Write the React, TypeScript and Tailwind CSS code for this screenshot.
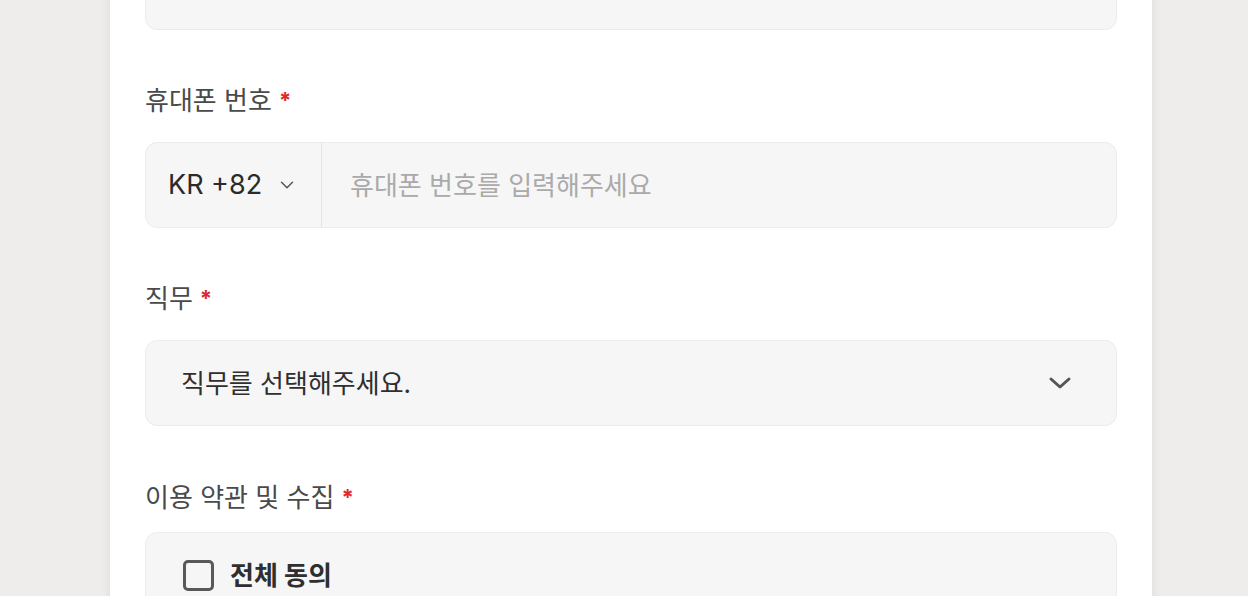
import { ChevronDown } from "lucide-react"

function Label({ text, className }: { text: string; className?: string }) {
  return (
    <div className={"flex items-center h-8 text-[26px] text-[#4a4a4a] " + (className ?? "")}>
      <span>{text}</span>
      <span className="ml-[7px] text-[#e0262b] font-bold text-[22px]">*</span>
    </div>
  )
}

export default function App() {
  return (
    <div
      className="h-[596px] overflow-hidden bg-[#eeedeb]"
      style={{ fontFamily: '"Inter", "Noto Sans CJK KR", sans-serif' }}
    >
      <div className="ml-[110px] w-[1042px] h-[700px] bg-white shadow-[0_0_10px_rgba(0,0,0,0.08)] px-[35px]">
        {/* previous field (scrolled out of view) */}
        <div className="-mt-[56px] h-[86px] rounded-[12px] border border-[#ececec] bg-[#f6f6f6]" />

        {/* phone */}
        <Label text="휴대폰 번호" className="mt-[54px]" />
        <div className="mt-[26px] flex h-[86px] rounded-[12px] border border-[#ececec] bg-[#f6f6f6]">
          <button className="flex w-[176px] items-center border-r border-[#e4e4e4] pl-[22px] text-[27px] text-[#2b2b2b]">
            KR +82
            <ChevronDown className="ml-[14px] h-[22px] w-[22px] text-[#555]" strokeWidth={1.6} />
          </button>
          <input
            className="flex-1 bg-transparent pl-[28px] text-[26px] text-[#333] outline-none placeholder:text-[#aaaaaa]"
            placeholder="휴대폰 번호를 입력해주세요"
          />
        </div>

        {/* job */}
        <Label text="직무" className="mt-[54px]" />
        <div className="mt-[26px] flex h-[86px] items-center justify-between rounded-[12px] border border-[#ececec] bg-[#f6f6f6] pl-[35px] pr-[44px]">
          <span className="text-[26px] text-[#2f2f2f]">직무를 선택해주세요.</span>
          <svg width="24" height="14" viewBox="0 0 24 14" fill="none">
            <path d="M3 3l9 8 9-8" stroke="#555" strokeWidth="3" strokeLinecap="round" strokeLinejoin="round" />
          </svg>
        </div>

        {/* terms */}
        <Label text="이용 약관 및 수집" className="mt-[55px]" />
        <div className="mt-[19px] h-[120px] rounded-[12px] border border-[#ececec] bg-[#f6f6f6] px-[37px] pt-[23px]">
          <label className="flex items-center">
            <span className="h-[31px] w-[31px] rounded-[5px] border-[3px] border-[#595959] bg-[#f6f6f6]" />
            <span className="ml-[16px] text-[26px] font-bold text-[#2f2f2f]">전체 동의</span>
          </label>
        </div>
      </div>
    </div>
  )
}
